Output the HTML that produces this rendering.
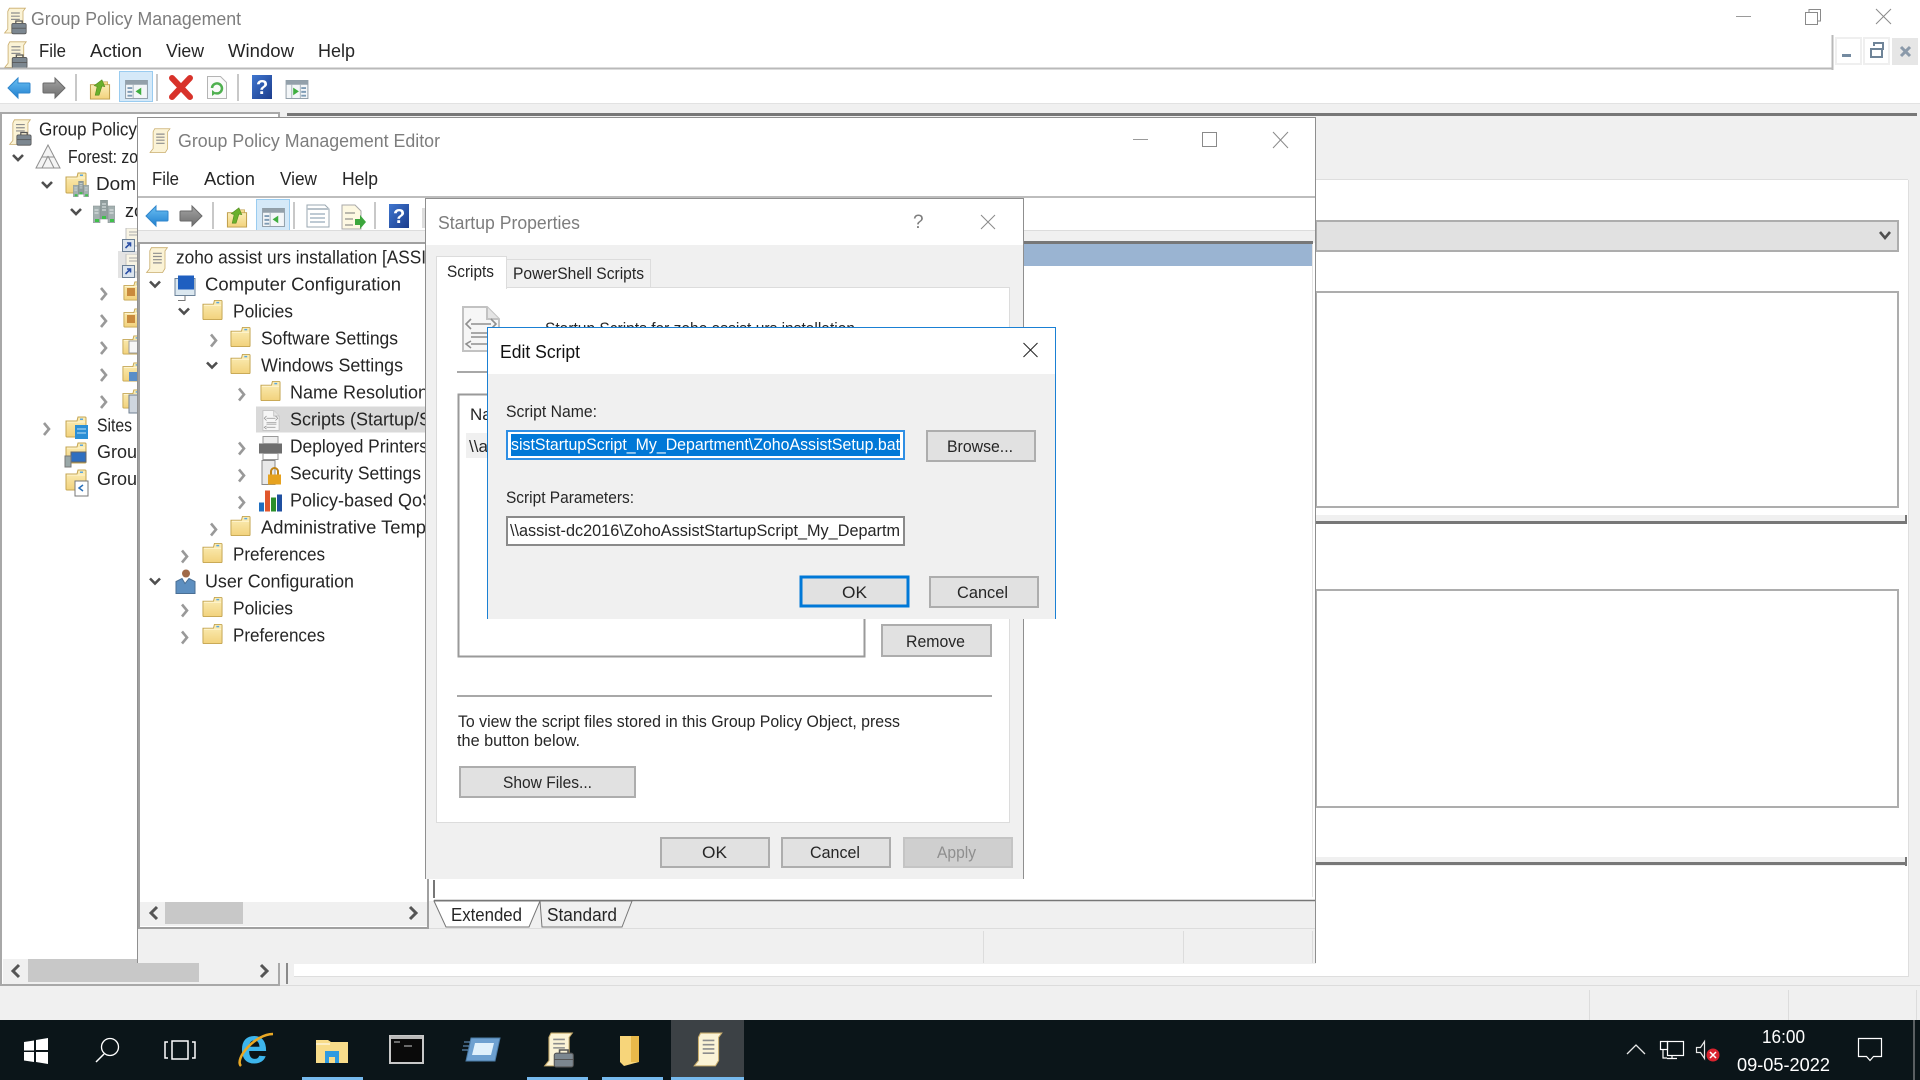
<!DOCTYPE html>
<html><head><meta charset="utf-8"><title>Group Policy Management</title>
<style>
html,body{margin:0;padding:0;width:1920px;height:1080px;overflow:hidden;background:#fff}
svg{display:block}
text{font-family:"Liberation Sans",sans-serif;font-size:18px;fill:#262626}
.g{fill:#7d7d7d}
.d{font-size:17px}
.btn{fill:#e1e1e1;stroke:#adadad;stroke-width:2}
.chr{fill:none;stroke:#999;stroke-width:2.6}
.chv{fill:none;stroke:#4f4f4f;stroke-width:2.6}
.sb{fill:none;stroke:#555;stroke-width:3}
.x{fill:none;stroke:#8a8a8a;stroke-width:1}
.t{fill:#fff;font-size:18px}
</style></head><body>
<svg width="1920" height="1080" viewBox="0 0 1920 1080" xmlns="http://www.w3.org/2000/svg">
<defs>
<linearGradient id="fy" x1="0" y1="0" x2="0" y2="1"><stop offset="0" stop-color="#fbeeb8"/><stop offset="1" stop-color="#f2d27c"/></linearGradient>
<linearGradient id="bl" x1="0" y1="0" x2="0" y2="1"><stop offset="0" stop-color="#6cc0f2"/><stop offset="1" stop-color="#1f7fd0"/></linearGradient>
<linearGradient id="gy" x1="0" y1="0" x2="0" y2="1"><stop offset="0" stop-color="#a4a4a4"/><stop offset="1" stop-color="#6e6e6e"/></linearGradient>
<linearGradient id="hp" x1="0" y1="0" x2="1" y2="1"><stop offset="0" stop-color="#3f76cf"/><stop offset="1" stop-color="#1c3c8c"/></linearGradient>
<symbol id="folder" viewBox="0 0 22 22"><path d="M1 5h11l1-4h7q1 0 1 1v18q0 1-1 1H2q-1 0-1-1z" fill="url(#fy)" stroke="#c4a552"/><path d="M2 6h18" stroke="#fff6d4"/><rect x="15" y="2.500" width="3" height="1.500" fill="#5aa6e0"/></symbol>
<symbol id="scroll" viewBox="0 0 30 34"><path d="M8 1h20l-3 4v22l-3 5H2l4-5V5z" fill="#fbf3d6" stroke="#c9ad6d"/><path d="M10 8h11M10 12h11M10 16h11M10 20h11" stroke="#8d8d8d" stroke-width="1.5"/></symbol>
<symbol id="gpm" viewBox="0 0 30 34"><path d="M8 1h20l-3 4v22l-3 5H2l4-5V5z" fill="#fbf3d6" stroke="#c9ad6d"/><path d="M10 7h11M10 11h11M10 15h11" stroke="#8d8d8d" stroke-width="1.5"/><rect x="11" y="20" width="18" height="13" rx="2" fill="#7c8790" stroke="#555"/><path d="M16 20v-3h8v3" fill="none" stroke="#555" stroke-width="1.5"/><path d="M11 26h18" stroke="#555"/></symbol>
<symbol id="back" viewBox="0 0 24 24"><path d="M1 12L11 2v5h11q1 0 1 1v8q0 1-1 1H11v5z" fill="url(#bl)" stroke="#2f86cc"/></symbol>
<symbol id="fwd" viewBox="0 0 24 24"><path d="M23 12L13 2v5H2q-1 0-1 1v8q0 1 1 1h11v5z" fill="url(#gy)" stroke="#6a6a6a"/></symbol>
<symbol id="up" viewBox="0 0 22 24"><path d="M1 8h20v15H1z" fill="url(#fy)" stroke="#bd9c49"/><rect x="14" y="5" width="5" height="3" fill="#f4dc92" stroke="#bd9c49" stroke-width=".6"/><path d="M6 19l2-9-3-1 8-6 3 7-3-.5-3 9.500z" fill="#6ab02c" stroke="#4e8a1b" stroke-width=".6"/></symbol>
<symbol id="winL" viewBox="0 0 24 20"><rect x=".5" y=".5" width="23" height="19" fill="#f3f6f8" stroke="#8e9ca6"/><rect x=".5" y=".5" width="23" height="4.500" fill="#93a0aa"/><path d="M2.500 7.500h5v2h-5zM2.500 11.500h5v2h-5zM2.500 15.500h5v2h-5z" fill="#7f9cb5"/><path d="M8.500 5v14" stroke="#a8b4bc"/><path d="M17 8v8l-6-4z" fill="#3fae3f"/></symbol>
<symbol id="winR" viewBox="0 0 24 20"><rect x=".5" y=".5" width="23" height="19" fill="#f3f6f8" stroke="#8e9ca6"/><rect x=".5" y=".5" width="23" height="4.500" fill="#93a0aa"/><path d="M16.500 7.500h5v2h-5zM16.500 11.500h5v2h-5zM16.500 15.500h5v2h-5z" fill="#7f9cb5"/><path d="M15.500 5v14M6.500 5v14" stroke="#a8b4bc"/><path d="M8 8v8l6-4z" fill="#3fae3f"/></symbol>
<symbol id="help" viewBox="0 0 20 24"><rect width="20" height="24" fill="url(#hp)"/><text x="4" y="19" style="font-size:20px;fill:#fff;font-weight:bold">?</text></symbol>
<symbol id="script" viewBox="0 0 20 24"><path d="M1 1h12l6 6v16H1z" fill="#f6f6f6" stroke="#c2c2c2"/><path d="M13 1v6h6" fill="#e4e4e4" stroke="#c2c2c2"/><path d="M5 7l-2.500 2.500L5 12M15 7l2.500 2.500L15 12M5 9.500h10M5 14h11M5 16h11M5 18l-2.500 1.500L5 21.500M5 19.500h10" fill="none" stroke="#8f8f8f" stroke-width=".8"/></symbol>
<symbol id="srv" viewBox="0 0 22 23"><rect x="0" y="6" width="7" height="17" fill="#a3b0b0" stroke="#8a9595" stroke-width=".6"/><rect x="7.500" y="0" width="7" height="19" fill="#909d9d" stroke="#7e8a8a" stroke-width=".6"/><rect x="15" y="6" width="7" height="17" fill="#a3b0b0" stroke="#8a9595" stroke-width=".6"/><rect x="2" y="19" width="4" height="3" fill="#3fc04a"/><rect x="9" y="16" width="4" height="3" fill="#3fc04a"/><rect x="17" y="19" width="4" height="3" fill="#3fc04a"/><path d="M1.500 10h4M1.500 13h4M9 4h4M9 7h4M9 10h4M16.500 10h4M16.500 13h4" stroke="#e4eaea"/></symbol>
<symbol id="short" viewBox="0 0 20 24"><path d="M4 0h14v18H4z" fill="#f8f4e4" stroke="#c2c2c2"/><path d="M7 4h8M7 7h8" stroke="#aaa"/><rect x=".5" y="11.500" width="12" height="12" fill="#dbe4ee" stroke="#6b7f95"/><path d="M3.500 20l5-5M5 15h3.500v3.500" fill="none" stroke="#2a4fa6" stroke-width="1.600"/></symbol>
</defs>

<!-- main window -->
<rect width="1920" height="1020" fill="#fff"/>
<use href="#gpm" x="3" y="7" width="24" height="28"/>
<text class="g" x="31" y="25" textLength="210" lengthAdjust="spacingAndGlyphs">Group Policy Management</text>
<path d="M1736 16.5h15" stroke="#9a9a9a"/>
<rect x="1805.5" y="12.5" width="12" height="12" fill="#fff" stroke="#8a8a8a"/><path d="M1809 12V9.5h11.5V21H1818" fill="none" stroke="#8a8a8a"/>
<path class="x" d="M1876 9l15 15M1891 9l-15 15"/>
<use href="#gpm" x="3" y="41" width="25" height="28"/>
<text x="39" y="57" textLength="27" lengthAdjust="spacingAndGlyphs">File</text>
<text x="90" y="57" textLength="52" lengthAdjust="spacingAndGlyphs">Action</text>
<text x="166" y="57" textLength="38" lengthAdjust="spacingAndGlyphs">View</text>
<text x="228" y="57" textLength="66" lengthAdjust="spacingAndGlyphs">Window</text>
<text x="318" y="57" textLength="37" lengthAdjust="spacingAndGlyphs">Help</text>
<path d="M0 68.5h1832M1832.5 35v35" stroke="#b9b9b9" stroke-width="2" fill="none"/>
<rect x="1836" y="38" width="25" height="26" fill="#fff" stroke="#efefef" stroke-width="2"/><rect x="1842" y="54" width="9" height="3" fill="#748aa0"/>
<rect x="1864" y="38" width="25" height="26" fill="#fff" stroke="#efefef" stroke-width="2"/><rect x="1871" y="49" width="11" height="8" fill="none" stroke="#6f8498" stroke-width="2"/><path d="M1874 46v-3h9v7" fill="none" stroke="#6f8498" stroke-width="2"/>
<rect x="1892" y="38" width="26" height="27" fill="#e6e6e6"/><path d="M1901 47l9 9M1910 47l-9 9" stroke="#8b9aaa" stroke-width="3"/>

<!-- main toolbar -->
<use href="#back" x="7" y="76" width="24" height="24"/>
<use href="#fwd" x="42" y="76" width="24" height="24"/>
<path d="M76 74v27M157 74v27M238 74v27" stroke="#b5b5b5" stroke-width="1.500"/>
<use href="#up" x="89" y="77" width="22" height="23"/>
<rect x="119.500" y="71.500" width="33" height="30" fill="#d5e9f8" stroke="#9accf0"/>
<use href="#winL" x="125" y="80" width="23" height="19"/>
<path d="M172 78l18 19M190 78l-18 19" stroke="#d8322a" stroke-width="6" stroke-linecap="round"/>
<path d="M207.500 76.500h13l6 6v16h-19z" fill="#fafafa" stroke="#b4b4b4"/><path d="M212 88a5 5 0 1 1 3 5" fill="none" stroke="#4fb04f" stroke-width="2.500"/><path d="M212 96l4-3-4-3z" fill="#4fb04f"/>
<use href="#help" x="252" y="75" width="20" height="24"/>
<use href="#winR" x="285" y="80" width="24" height="19"/>
<rect x="0" y="103" width="1920" height="917" fill="#f0f0f0"/>
<path d="M0 103.500h1920" stroke="#e2e2e2"/>

<!-- main left pane -->
<rect x="1" y="113" width="278" height="872" fill="#fff" stroke="#a8a8a8" stroke-width="2"/>
<rect x="287" y="113" width="1630" height="3" fill="#777"/>
<rect x="1316" y="180" width="592" height="796" fill="#fff"/>
<rect x="294" y="964" width="1022" height="12" fill="#fff"/>
<path d="M294 976.500h1615M1908.500 180v797M1316 179.500h592" stroke="#dedede" fill="none"/>
<path d="M280 985.500h1640" stroke="#dcdcdc"/>
<rect x="1316" y="221" width="582" height="30" class="btn"/>
<path class="chv" d="M1880 232l5 6 5-6"/>
<rect x="1316" y="292" width="582" height="215" fill="#fff" stroke="#adadad" stroke-width="2"/>
<rect x="1316" y="515" width="591" height="9" fill="#f0f0f0"/><rect x="1316" y="521" width="591" height="3" fill="#777"/><rect x="1905" y="515" width="2" height="9" fill="#777"/>
<rect x="1316" y="590" width="582" height="217" fill="#fff" stroke="#adadad" stroke-width="2"/>
<rect x="1316" y="857" width="591" height="9" fill="#f0f0f0"/><rect x="1316" y="862" width="591" height="3" fill="#777"/><rect x="1905" y="857" width="2" height="9" fill="#777"/>

<use href="#gpm" x="8" y="119" width="24" height="27"/>
<text x="39" y="135.500" textLength="98" lengthAdjust="spacingAndGlyphs">Group Policy</text>
<path class="chv" d="M13 155l5 5 5-5M42 182l5 5 5-5M71 209l5 5 5-5"/>
<path d="M48 145l12 23H36z" fill="#f4f4f4" stroke="#8f8f8f"/><path d="M48 156l-6 12M48 156l6 12M42 157h12" stroke="#8f8f8f" fill="none"/>
<text x="68" y="163" textLength="70" lengthAdjust="spacingAndGlyphs">Forest: zo</text>
<use href="#folder" x="65" y="172" width="22" height="22"/><use href="#srv" x="72" y="181" width="18" height="16"/>
<text x="96" y="190" textLength="40" lengthAdjust="spacingAndGlyphs">Dom</text>
<use href="#srv" x="93" y="200" width="22" height="23"/>
<text x="125" y="217">zoho</text>
<rect x="118" y="251" width="19" height="27" fill="#e3e3e3"/>
<use href="#short" x="122" y="228" width="20" height="24"/>
<use href="#short" x="122" y="254" width="20" height="24"/>
<path class="chr" d="M101 288l5 6-5 6M101 315l5 6-5 6M101 342l5 6-5 6M101 369l5 6-5 6M101 396l5 6-5 6M44 423l5 6-5 6"/>
<use href="#folder" x="123" y="281" width="20" height="20"/><rect x="127" y="288" width="8" height="8" fill="#c98a3c"/>
<use href="#folder" x="123" y="308" width="20" height="20"/><rect x="127" y="315" width="8" height="8" fill="#c98a3c"/>
<use href="#folder" x="122" y="335" width="20" height="20"/><rect x="129" y="341" width="9" height="12" fill="#f6f6f6" stroke="#999"/>
<use href="#folder" x="122" y="362" width="20" height="20"/><rect x="129" y="372" width="9" height="9" fill="#5a8ec8"/>
<use href="#folder" x="122" y="389" width="20" height="20"/><rect x="129" y="395" width="9" height="18" fill="#cfd6de" stroke="#6f7f90"/>
<use href="#folder" x="65" y="416" width="22" height="22"/><rect x="75" y="425" width="13" height="14" fill="#2b8fd6"/><path d="M77 429h9M77 433h9" stroke="#bfe1f7"/>
<text x="97" y="431.500" textLength="35" lengthAdjust="spacingAndGlyphs">Sites</text>
<use href="#folder" x="65" y="442" width="22" height="22"/><rect x="71" y="452" width="15" height="10" fill="#2f6fc0" stroke="#666"/><rect x="65" y="456" width="6" height="11" fill="#9aa8a8" stroke="#777"/>
<text x="97" y="458">Group</text>
<use href="#folder" x="65" y="469" width="22" height="22"/><rect x="75" y="481" width="13" height="15" fill="#fff" stroke="#777"/><path d="M83 485l-4 3 4 3" fill="none" stroke="#2a6fb8" stroke-width="1.500"/>
<text x="97" y="485">Group</text>

<!-- main scrollbar -->
<rect x="3" y="959" width="275" height="25" fill="#f0f0f0"/>
<rect x="28" y="959" width="171" height="23" fill="#c8c8c8"/>
<path class="sb" d="M19 965l-6 6 6 6M261 965l6 6-6 6"/>
<rect x="286" y="963" width="2" height="21" fill="#8a8a8a"/>

<!-- status separators -->
<path d="M1589.500 990v30M1788.500 990v30M1916.500 990v30" stroke="#dcdcdc"/>

<!-- editor window -->
<rect x="138" y="118" width="1178" height="845" fill="#fff"/>
<path d="M137.500 963V117.500h1178V963" fill="none" stroke="#8f8f8f"/>
<use href="#scroll" x="148" y="128" width="24" height="26"/>
<text class="g" x="178" y="147" textLength="262" lengthAdjust="spacingAndGlyphs">Group Policy Management Editor</text>
<path d="M1133 139.500h15" stroke="#9a9a9a"/>
<rect x="1202.500" y="132.500" width="14" height="14" fill="none" stroke="#8a8a8a"/>
<path class="x" d="M1273 132l15 16M1288 132l-15 16"/>
<text x="152" y="185" textLength="27" lengthAdjust="spacingAndGlyphs">File</text>
<text x="204" y="185" textLength="51" lengthAdjust="spacingAndGlyphs">Action</text>
<text x="280" y="185" textLength="37" lengthAdjust="spacingAndGlyphs">View</text>
<text x="342" y="185" textLength="36" lengthAdjust="spacingAndGlyphs">Help</text>
<path d="M138 197h1177" stroke="#bdbdbd" stroke-width="2"/>
<use href="#back" x="145" y="204" width="24" height="24"/>
<use href="#fwd" x="179" y="204" width="24" height="24"/>
<path d="M213 202v27M294 202v27M375 202v27" stroke="#b5b5b5" stroke-width="1.500"/>
<use href="#up" x="226" y="205" width="22" height="23"/>
<rect x="256.500" y="199.500" width="33" height="31" fill="#d5e9f8" stroke="#9accf0"/>
<use href="#winL" x="262" y="208" width="23" height="19"/>
<path d="M307 205h18l4 4v18h-22z" fill="#fff" stroke="#9aa7b0"/><path d="M307 209h22" stroke="#b8c2ca" stroke-width="2"/><path d="M310 214h15M310 218h15M310 222h15" stroke="#7d94aa"/>
<path d="M342 205h13l6 6v18h-19z" fill="#fdf8e2" stroke="#a9a9a9"/><path d="M345 213h10M345 219h8M345 225h8" stroke="#777"/><path d="M355 219h5v-4l6 7-6 7v-4h-5z" fill="#3ca63c"/>
<use href="#help" x="389" y="204" width="20" height="24"/>
<rect x="422" y="208" width="6" height="20" fill="#ddd"/>
<rect x="138" y="231" width="1177" height="12" fill="#f0f0f0"/>
<path d="M138 230.500h1177" stroke="#dcdcdc"/>
<rect x="430" y="241" width="883" height="3" fill="#777"/>
<rect x="430" y="244" width="882" height="22" fill="#9ab4d2"/>

<!-- tree -->
<rect x="139" y="243" width="289" height="685" fill="#fff" stroke="#a0a0a0" stroke-width="2"/>
<g transform="translate(0,-.5)">
<use href="#scroll" x="145" y="247" width="24" height="28"/>
<text x="176" y="264" textLength="250" lengthAdjust="spacingAndGlyphs">zoho assist urs installation [ASSI</text>
<path class="chv" d="M150 282l5 5 5-5M179 309l5 5 5-5M207 363l5 5 5-5M150 579l5 5 5-5"/>
<path class="chr" d="M211 335l5 6-5 6M239 389l5 6-5 6M239 443l5 6-5 6M239 470l5 6-5 6M239 497l5 6-5 6M211 524l5 6-5 6M182 551l5 6-5 6M182 605l5 6-5 6M182 632l5 6-5 6"/>
<rect x="175" y="279" width="20" height="17" fill="#dbe7ef" stroke="#6b8299"/><rect x="178" y="276" width="16" height="14" fill="#1f5fc0"/><path d="M185 296v5h-7" stroke="#777" fill="none"/>
<text x="205" y="291" textLength="196" lengthAdjust="spacingAndGlyphs">Computer Configuration</text>
<use href="#folder" x="202" y="300" width="21" height="21"/>
<text x="233" y="318" textLength="60" lengthAdjust="spacingAndGlyphs">Policies</text>
<use href="#folder" x="230" y="327" width="21" height="21"/>
<text x="261" y="345" textLength="137" lengthAdjust="spacingAndGlyphs">Software Settings</text>
<use href="#folder" x="230" y="354" width="21" height="21"/>
<text x="261" y="372" textLength="142" lengthAdjust="spacingAndGlyphs">Windows Settings</text>
<use href="#folder" x="260" y="381" width="21" height="21"/>
<text x="290" y="399">Name Resolution Policy</text>
<rect x="256" y="407" width="172" height="26" fill="#d9d9d9"/>
<use href="#script" x="262" y="410" width="18" height="22"/>
<text x="290" y="426">Scripts (Startup/Shutdown)</text>
<rect x="259" y="444" width="23" height="10" fill="#6e6e6e"/><rect x="263" y="437" width="15" height="7" fill="#eee" stroke="#999"/><rect x="263" y="454" width="15" height="6" fill="#fff" stroke="#999"/>
<text x="290" y="453" textLength="138" lengthAdjust="spacingAndGlyphs">Deployed Printers</text>
<rect x="262" y="461" width="13" height="24" fill="#e8e8e8" stroke="#8a8a8a"/><rect x="268" y="475" width="13" height="10" fill="#e6a21f"/><path d="M271 475v-3a3 3 0 0 1 7 0v3" fill="none" stroke="#c08316" stroke-width="2"/>
<text x="290" y="480" textLength="131" lengthAdjust="spacingAndGlyphs">Security Settings</text>
<rect x="259" y="503" width="5" height="9" fill="#1f6fc0"/><rect x="265" y="491" width="5" height="21" fill="#e0562c"/><rect x="271" y="498" width="5" height="14" fill="#2c8f2c"/><rect x="277" y="495" width="5" height="17" fill="#1f4fa0"/>
<text x="290" y="507">Policy-based QoS</text>
<use href="#folder" x="230" y="516" width="21" height="21"/>
<text x="261" y="534" textLength="165" lengthAdjust="spacingAndGlyphs">Administrative Temp</text>
<use href="#folder" x="202" y="543" width="21" height="21"/>
<text x="233" y="561" textLength="92" lengthAdjust="spacingAndGlyphs">Preferences</text>
<circle cx="186" cy="574" r="4" fill="#a06a48"/><path d="M176 594v-12l6-3 3 5 4-5 6 3v12z" fill="#5d8fc0" stroke="#4a6f94"/>
<text x="205" y="588" textLength="149" lengthAdjust="spacingAndGlyphs">User Configuration</text>
<use href="#folder" x="202" y="597" width="21" height="21"/>
<text x="233" y="615" textLength="60" lengthAdjust="spacingAndGlyphs">Policies</text>
<use href="#folder" x="202" y="624" width="21" height="21"/>
<text x="233" y="642" textLength="92" lengthAdjust="spacingAndGlyphs">Preferences</text>
</g>

<!-- editor scrollbar -->
<rect x="140" y="902" width="287" height="24" fill="#f0f0f0"/>
<rect x="165" y="902" width="78" height="22" fill="#c8c8c8"/>
<path class="sb" d="M157 907l-6 6 6 6M410 907l6 6-6 6"/>
<!-- status band + tab strip -->
<rect x="138" y="929" width="1177" height="34" fill="#f0f0f0"/>
<rect x="429" y="901" width="886" height="28" fill="#f0f0f0"/>
<path d="M1312.500 244v653" stroke="#e4e4e4"/>
<path d="M434 880v18" stroke="#777" stroke-width="2"/>
<path d="M434 900.500h881" stroke="#777" stroke-width="1.500"/>
<path d="M434 901l12 26h83l11-26z" fill="#fff" stroke="#777"/>
<path d="M540 901l2 26h80l10-26z" fill="#f0f0f0" stroke="#777"/>
<text x="451" y="921" textLength="71" lengthAdjust="spacingAndGlyphs">Extended</text>
<text x="547" y="921" textLength="70" lengthAdjust="spacingAndGlyphs">Standard</text>
<path d="M429 928.500h886M983.500 931v32M1183.500 931v32M1312.500 931v32" stroke="#dcdcdc" fill="none"/>

<!-- startup properties -->
<rect x="426" y="199" width="597" height="680" fill="#f0f0f0"/>
<path d="M425.500 879V198.500h598V879" fill="none" stroke="#8f8f8f"/>
<rect x="426" y="199" width="597" height="46" fill="#fff"/>
<text class="g" x="438" y="229" textLength="142" lengthAdjust="spacingAndGlyphs">Startup Properties</text>
<text class="g" x="913" y="228" style="font-size:19px">?</text>
<path class="x" d="M981 215l14 14M995 215l-14 14"/>
<rect x="436.500" y="287.500" width="573" height="535" fill="#fff" stroke="#dcdcdc"/>
<rect x="506.500" y="259.500" width="144" height="28" fill="#f0f0f0" stroke="#dcdcdc"/>
<rect x="436.500" y="256.500" width="70" height="32" fill="#fff" stroke="#dcdcdc"/><rect x="437" y="285" width="69" height="4" fill="#fff"/>
<text class="d" x="447" y="277" textLength="47" lengthAdjust="spacingAndGlyphs">Scripts</text>
<text class="d" x="513" y="279" textLength="131" lengthAdjust="spacingAndGlyphs">PowerShell Scripts</text>
<use href="#script" x="461" y="305" width="40" height="48"/>
<text class="d" x="545" y="334" textLength="310" lengthAdjust="spacingAndGlyphs">Startup Scripts for zoho assist urs installation</text>
<path d="M457 372h535M457 696h535" stroke="#a8a8a8" stroke-width="2"/>
<rect x="458.500" y="394.500" width="406" height="262" fill="#fff" stroke="#9a9a9a" stroke-width="2"/>
<text class="d" x="470" y="420">Name</text>
<rect x="466" y="433" width="380" height="25" fill="#f0f0f0"/>
<text class="d" x="469" y="452">\\assist-dc2016</text>
<rect x="882" y="625" width="109" height="31" class="btn"/>
<text class="d" x="906" y="647" textLength="59" lengthAdjust="spacingAndGlyphs">Remove</text>
<text class="d" x="458" y="727" textLength="442" lengthAdjust="spacingAndGlyphs">To view the script files stored in this Group Policy Object, press</text>
<text class="d" x="457" y="746" textLength="123" lengthAdjust="spacingAndGlyphs">the button below.</text>
<rect x="460" y="767" width="175" height="30" class="btn"/>
<text class="d" x="503" y="788" textLength="89" lengthAdjust="spacingAndGlyphs">Show Files...</text>
<rect x="661" y="838" width="108" height="29" class="btn"/>
<text class="d" x="702" y="858" textLength="25" lengthAdjust="spacingAndGlyphs">OK</text>
<rect x="782" y="838" width="108" height="29" class="btn"/>
<text class="d" x="810" y="858" textLength="50" lengthAdjust="spacingAndGlyphs">Cancel</text>
<rect x="904" y="838" width="108" height="29" fill="#cfcfcf" stroke="#c4c4c4" stroke-width="2"/>
<text class="d" x="937" y="858" textLength="39" lengthAdjust="spacingAndGlyphs" style="fill:#8f8f8f">Apply</text>

<!-- edit script -->
<path d="M487.500 619V327.500h568V619" fill="#f0f0f0" stroke="#1a80d4"/>
<rect x="488" y="328" width="567" height="46" fill="#fff"/>
<text x="500" y="358" textLength="80" lengthAdjust="spacingAndGlyphs" style="fill:#111">Edit Script</text>
<path d="M1023.500 343l14 14M1037.500 343l-14 14" fill="none" stroke="#222"/>
<text class="d" x="506" y="417" textLength="91" lengthAdjust="spacingAndGlyphs">Script Name:</text>
<rect x="507" y="431" width="397" height="28" fill="#fff" stroke="#2f8fe4" stroke-width="2"/>
<rect x="511" y="434" width="389" height="22" fill="#0078d7"/>
<text class="d" x="511" y="450" textLength="389" lengthAdjust="spacingAndGlyphs" style="fill:#fff">sistStartupScript_My_Department\ZohoAssistSetup.bat</text>
<rect x="927" y="431" width="108" height="30" class="btn"/>
<text class="d" x="947" y="452" textLength="66" lengthAdjust="spacingAndGlyphs">Browse...</text>
<text class="d" x="506" y="503" textLength="128" lengthAdjust="spacingAndGlyphs">Script Parameters:</text>
<rect x="507" y="517" width="397" height="28" fill="#fff" stroke="#8a8a8a" stroke-width="2"/>
<text class="d" x="510" y="536" textLength="390" lengthAdjust="spacingAndGlyphs">\\assist-dc2016\ZohoAssistStartupScript_My_Departm</text>
<rect x="801" y="577" width="107" height="29" fill="#e1e1e1" stroke="#0078d7" stroke-width="3"/>
<text class="d" x="842" y="598" textLength="25" lengthAdjust="spacingAndGlyphs">OK</text>
<rect x="930" y="577" width="108" height="30" class="btn"/>
<text class="d" x="957" y="598" textLength="51" lengthAdjust="spacingAndGlyphs">Cancel</text>

<!-- taskbar -->
<rect y="1020" width="1920" height="60" fill="#0b1519"/>
<path d="M24 1042l10-1.500v10H24zM36 1040l12-2v12H36zM24 1052h10v10l-10-1.500zM36 1052h12v12l-12-2z" fill="#fff"/>
<circle cx="110" cy="1047" r="8.500" fill="none" stroke="#fff" stroke-width="1.300"/><path d="M104 1054l-8 8" stroke="#fff" stroke-width="1.500"/>
<rect x="172" y="1041" width="16" height="18" fill="none" stroke="#fff" stroke-width="1.500"/><path d="M168 1042h-3v16h3M192 1042h3v16h-3" fill="none" stroke="#fff" stroke-width="1.500"/>
<text x="240" y="1063" style="font-size:50px;font-weight:bold;fill:#3db5ec">e</text><path d="M241 1066c-7-7 14-32 32-32" fill="none" stroke="#e9a825" stroke-width="2.500"/>
<path d="M316 1040h12l3 2h17v21h-32z" fill="#f8dc8a"/><path d="M316 1044h14" stroke="#fff"/><path d="M325 1063v-12h14v12h-4v-6h-6v6z" fill="#2f9be0"/>
<rect x="302" y="1077" width="61" height="3" fill="#76b9ed"/>
<rect x="390" y="1036" width="33" height="27" fill="#0a0a0a" stroke="#c8c8c8" stroke-width="2"/><rect x="391" y="1036" width="31" height="3" fill="#b8b8b8"/><path d="M394 1042h6M404 1046h8" stroke="#ccc"/>
<path d="M471 1038h29l-5 23h-29z" fill="#6da0d0" stroke="#4a7aa5"/><path d="M475 1043h19l-3 12h-19z" fill="#dff0fb"/><path d="M464 1042h6M463 1046h6M462 1050h6" stroke="#6da0d0"/>
<use href="#gpm" x="541" y="1032" width="35" height="36"/>
<rect x="527" y="1077" width="61" height="3" fill="#76b9ed"/>
<path d="M620 1036h19v26l-15 4-4-4z" fill="#f7d57a"/><path d="M631 1036h8v26h-8z" fill="#e8b94a"/>
<rect x="602" y="1077" width="61" height="3" fill="#76b9ed"/>
<rect x="671" y="1020" width="73" height="60" fill="#3c4145"/>
<use href="#scroll" x="691" y="1032" width="34" height="36"/>
<rect x="671" y="1077" width="73" height="3" fill="#76b9ed"/>

<!-- tray -->
<path d="M1627 1054l9-9 9 9" fill="none" stroke="#e8e8e8" stroke-width="1.300"/>
<rect x="1667.500" y="1041.500" width="16" height="14" fill="none" stroke="#fff" stroke-width="1.200"/><rect x="1660.500" y="1041.500" width="7" height="8" fill="none" stroke="#fff" stroke-width="1.200"/><path d="M1663 1050v8h4M1672 1056v2M1667 1058.500h10" stroke="#fff" stroke-width="1.200" fill="none"/>
<path d="M1696.500 1047.500h4l4-6v17l-4-6h-4z" fill="none" stroke="#e8e8e8" stroke-width="1.200"/>
<circle cx="1713" cy="1055" r="6.500" fill="#d9232e"/><path d="M1710 1052l6 6M1716 1052l-6 6" stroke="#fff" stroke-width="1.500"/>
<text class="t" x="1762" y="1043" textLength="43" lengthAdjust="spacingAndGlyphs">16:00</text>
<text class="t" x="1737" y="1071" textLength="93" lengthAdjust="spacingAndGlyphs">09-05-2022</text>
<path d="M1858.500 1038.500h23v18h-8l-3.500 4-3.500-4h-8z" fill="none" stroke="#fff" stroke-width="1.200"/>
<rect x="1913" y="1020" width="2" height="60" fill="#5a5f62"/>
</svg>
</body></html>
